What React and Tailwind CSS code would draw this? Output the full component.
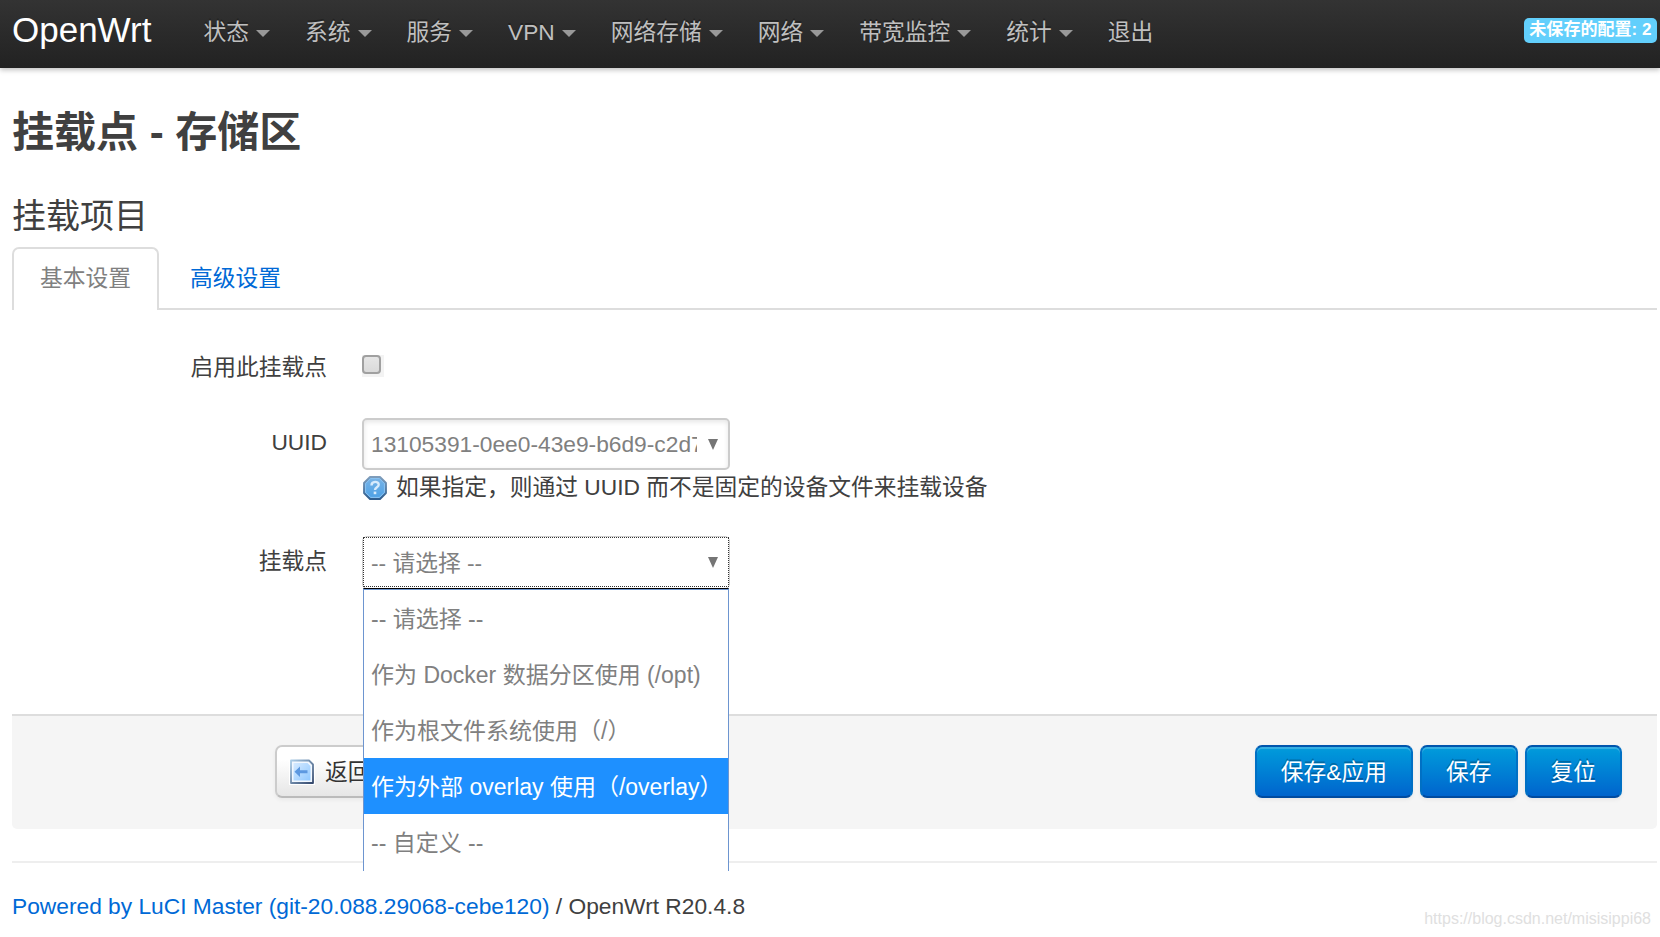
import React, { useState } from 'react';

const NAV = [
  { label: '状态', menu: true },
  { label: '系统', menu: true },
  { label: '服务', menu: true },
  { label: 'VPN', menu: true },
  { label: '网络存储', menu: true },
  { label: '网络', menu: true },
  { label: '带宽监控', menu: true },
  { label: '统计', menu: true },
  { label: '退出', menu: false },
];

const OPTIONS = [
  '-- 请选择 --',
  '作为 Docker 数据分区使用 (/opt)',
  '作为根文件系统使用（/）',
  '作为外部 overlay 使用（/overlay）',
  '-- 自定义 --',
];

function Arrow() {
  return (
    <svg width="10" height="11" viewBox="0 0 10 11" className="shrink-0">
      <path d="M0 0h10L5 11z" fill="#757575" />
    </svg>
  );
}

function HelpIcon() {
  return (
    <svg width="24" height="24" viewBox="0 0 24 24" className="shrink-0">
      <defs>
        <linearGradient id="help" x1="0" y1="0" x2="0" y2="1">
          <stop offset="0" stopColor="#7ab4e6" />
          <stop offset="1" stopColor="#4ba0e6" />
        </linearGradient>
        <linearGradient id="helpEdge" x1="0" y1="0" x2="0" y2="1">
          <stop offset="0" stopColor="#7f9dbb" />
          <stop offset="1" stopColor="#2f5d8e" />
        </linearGradient>
      </defs>
      <path d="M7 1h10l6 6v10l-6 6H7l-6-6V7z" fill="url(#help)" stroke="url(#helpEdge)" strokeWidth="1.8" strokeLinejoin="round" />
      <path d="M7.6 2.6h8.8l5 5v8.8l-5 5H7.6l-5-5V7.6z" fill="none" stroke="#8cc4f2" strokeWidth="1" />
      <path d="M8.5 9.5c0-4.7 7.2-4.7 7.2-.8 0 2.6-3.7 2.4-3.7 5.3" fill="none" stroke="#d8ebfc" strokeWidth="2.4" />
      <rect x="10.7" y="15.6" width="2.6" height="2.6" fill="#d8ebfc" />
    </svg>
  );
}

function BackIcon() {
  return (
    <svg width="26" height="26" viewBox="0 0 26 26" className="shrink-0">
      <defs>
        <linearGradient id="frame" x1="0" y1="0" x2="1" y2="1">
          <stop offset="0" stopColor="#a9cbe6" />
          <stop offset="1" stopColor="#34486c" />
        </linearGradient>
        <linearGradient id="page" x1="0" y1="0" x2="1" y2="1">
          <stop offset="0" stopColor="#d5eaff" />
          <stop offset="1" stopColor="#90c8ff" />
        </linearGradient>
      </defs>
      <rect width="26" height="26" fill="#fff" />
      <path d="M2 1.5h18l4 4v18.5H2z" fill="#f2f8ff" stroke="url(#frame)" strokeWidth="1.8" strokeLinejoin="round" />
      <path d="M4.5 4h14l3 3v14.5h-17z" fill="url(#page)" />
      <path d="M5.5 12.7l5.500-5.200v3.700h7.500v3H11v3.700z" fill="#5c98e0" />
    </svg>
  );
}

function PrimaryButton({ children }) {
  return (
    <button className="h-[53px] px-6 pt-[1px] rounded-[7px] border-2 border-t-[#0055ad] border-x-[#0070c4] border-b-[#004ba0] bg-linear-to-b from-[#049cdb] to-[#0064cd] text-white leading-[32px] shadow-[inset_0_2px_0_rgba(255,255,255,.2),0_2px_4px_rgba(0,0,0,.05)] [text-shadow:0_-2px_0_rgba(0,0,0,.25)]">
      {children}
    </button>
  );
}

export default function App() {
  const [tab, setTab] = useState(0);
  const [selected, setSelected] = useState(3);

  return (
    <div className="h-[937px] overflow-hidden bg-white text-[#404040] text-[22.75px] leading-[32px] font-['Liberation_Sans','Noto_Sans_CJK_SC',sans-serif]">
      <header className="h-[68px] flex items-start pl-3 pr-[3px] bg-linear-to-b from-[#333] to-[#222] shadow-[0_2px_5px_rgba(0,0,0,.25)]">
        <a className="w-[174px] pt-[12px] text-[35px] leading-[35px] text-white">OpenWrt</a>
        <nav className="flex flex-1">
          {NAV.map((item) => (
            <a key={item.label} className="flex items-center h-[64px] px-[17.5px] text-[#bfbfbf] whitespace-nowrap [text-shadow:0_-2px_0_rgba(0,0,0,.25)]">
              {item.label}
              {item.menu && <span className="ml-[7px] mt-[3px] border-x-[7px] border-t-[7px] border-x-transparent border-t-[#999]" />}
            </a>
          ))}
        </nav>
        <span className="mt-[18px] h-[25px] px-[5.5px] rounded-[5px] bg-[#62cffc] text-white text-[17.06px] leading-[23px] font-bold whitespace-nowrap">未保存的配置: 2</span>
      </header>

      <main className="pl-3 pr-[3px]">
        <h2 className="pt-[33px] text-[42px] leading-[63px] font-bold">挂载点 - 存储区</h2>

        <h3 className="pt-[35px] text-[34px] leading-[34px]">挂载项目</h3>

        {/* Tabs */}
        <div className="mt-[14px] h-[63px] flex border-b-2 border-[#ddd]">
          {['基本设置', '高级设置'].map((name, i) => (
            <button
              key={name}
              onClick={() => setTab(i)}
              className={`h-[63px] mr-[3px] px-[26px] pb-[4px] rounded-t-[7px] border-2 border-b-0 ${tab === i ? 'border-[#ddd] bg-white text-[#808080]' : 'border-transparent text-[#0069d6]'}`}
            >
              {name}
            </button>
          ))}
        </div>

        <div className="h-[404px] grid grid-cols-[315px_1fr] auto-rows-max content-start gap-x-[35px]">
          <label className="pt-[41px] text-right">启用此挂载点</label>
          <div className="pt-[45px]">
            <div className="w-[22px] h-[22px] bg-[#f3f3f3]">
              <div className="w-[19px] h-[19px] rounded-[4px] border-2 border-[#a0a0a0] bg-linear-to-b from-[#e6e6e6] to-[#dadada]" />
            </div>
          </div>

          <label className="pt-[43px] text-right">UUID</label>
          <div className="pt-[35px]">
            <div className="w-[368px] h-[52px] flex items-center pl-[7px] pr-[10px] rounded-[5px] border-2 border-[#ccc] text-[#808080] shadow-[inset_0_2px_5px_rgba(0,0,0,.1)]">
              <span className="w-[326px] mr-[11px] overflow-hidden whitespace-nowrap">13105391-0ee0-43e9-b6d9-c2d7</span>
              <Arrow />
            </div>
            <div className="mt-[2px] pl-[1px] flex items-center gap-[9px]">
              <HelpIcon />
              <span className="pb-[2px] leading-[30px]">如果指定，则通过 UUID 而不是固定的设备文件来挂载设备</span>
            </div>
          </div>

          <label className="pt-[41px] text-right">挂载点</label>
          <div className="pt-[32px]">
            <div className="relative w-[368px] h-[53px] rounded-[5px] border border-[#ccc]">
              <div className="h-[50px] flex items-center justify-between pl-[7px] pr-[10px] border border-dotted border-[#333] text-[#808080]">
                <span className="pt-[1px]">-- 请选择 --</span>
                <Arrow />
              </div>
              {/* Open dropdown list */}
              <ul className="absolute z-10 left-0 top-[51px] w-[366px] h-[283px] overflow-hidden bg-white border-x border-x-[#6d95d0] border-t border-t-black text-[#808080] text-[23px]">
                <li className="h-[1px] bg-[#6d95d0]" />
                {OPTIONS.map((opt, i) => (
                  <li
                    key={opt}
                    onClick={() => setSelected(i)}
                    className={`h-[56px] pl-[7px] leading-[59px] whitespace-nowrap ${i === selected ? 'bg-[#1e90ff] text-white' : ''}`}
                  >
                    {opt}
                  </li>
                ))}
              </ul>
            </div>
          </div>
        </div>

        {/* Page actions */}
        <div className="h-[115px] flex items-start pt-[29px] pl-[263px] pr-[35px] rounded-b-[5px] border-t-2 border-[#ddd] bg-[#f5f5f5]">
          <button className="h-[53px] flex items-center gap-[10px] px-[12px] rounded-[7px] border-2 border-[#ccc] border-b-[#bbb] bg-linear-to-b from-white from-25% to-[#e6e6e6] text-[#333] shadow-[0_2px_4px_rgba(0,0,0,.05)]">
            <BackIcon />
            返回
          </button>
          <div className="ml-auto flex gap-[7px]">
            <PrimaryButton>保存&amp;应用</PrimaryButton>
            <PrimaryButton>保存</PrimaryButton>
            <PrimaryButton>复位</PrimaryButton>
          </div>
        </div>

        <footer className="mt-[32px] pt-[27px] flex justify-between border-t-2 border-[#eee]">
          <p>
            <a className="text-[#0069d6]">Powered by LuCI Master (git-20.088.29068-cebe120)</a> / OpenWrt R20.4.8
          </p>
          <span className="mt-[13px] mr-[6px] text-[16px] text-[#e0e0e0]">https://blog.csdn.net/misisippi68</span>
        </footer>
      </main>
    </div>
  );
}
